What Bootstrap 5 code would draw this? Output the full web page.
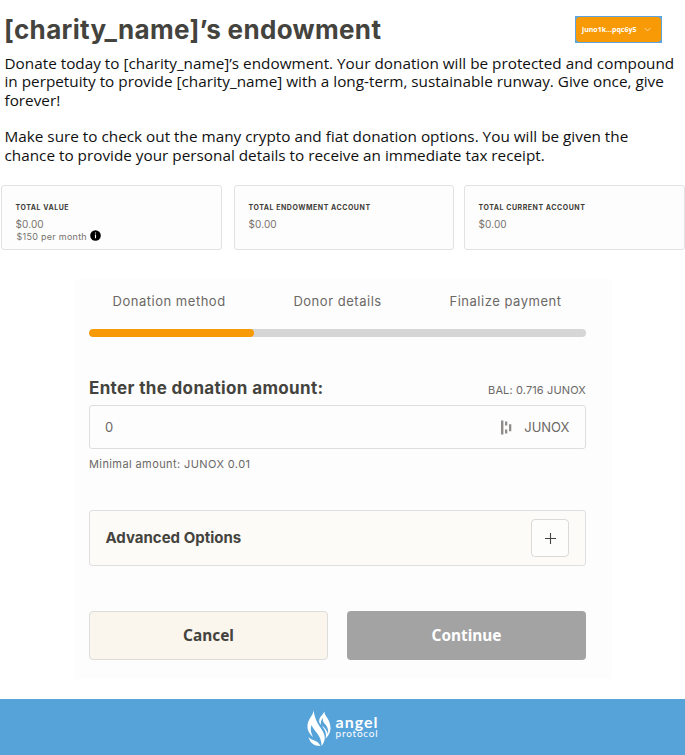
<!DOCTYPE html>
<html lang="en">
<head>
<meta charset="utf-8">
<meta name="viewport" content="width=device-width, initial-scale=1">
<title>Endowment donation</title>
<link href="https://cdn.jsdelivr.net/npm/bootstrap@5.3.0/dist/css/bootstrap.min.css" rel="stylesheet">
<style>
body{font-family:"Open Sans",sans-serif;color:#101010;background:#fff;height:755px;overflow:hidden}
.topbar{height:54px;padding:12px 23px 0 4px}
.page-title{font:700 26px/36px Inter,sans-serif;letter-spacing:.33px;color:#44433e}
.wallet{border:1px solid #5ba5dc;background:#5ba5dc;width:87.5px;height:27px;margin-top:4px}
.wallet .btn{background:#f79a05;border:0;border-radius:4px;color:#fff;font-weight:700;font-size:7px;line-height:1;padding:0 10px 0 6.5px}
.intro{font-size:15.3px;line-height:18.3px;padding-left:4.5px;height:131px;white-space:nowrap}
.intro p{margin-bottom:18.6px}
.totals{display:grid;grid-template-columns:221px 220px 221px;column-gap:10px;justify-content:end;height:65px}
.total-box:first-child{margin-left:-2px;margin-right:2px}
.total-box{background:#fdfdfd;border:1px solid #e2e2e4;border-radius:3px;padding:17px 14px 0 13.5px;font-family:Inter,sans-serif;color:#77736d}
.total-box h2{font-size:7px;line-height:9px;font-weight:700;letter-spacing:.53px;color:#3f3d3a;margin-bottom:6px}
.total-box .amount{font-size:10px;line-height:12px;letter-spacing:.1px}
.total-box .monthly{font-size:9px;line-height:13px;letter-spacing:.27px;padding-left:1px;gap:3px}
.monthly svg{margin-top:-2px}
.panel{width:537px;height:400px;margin:29px 0 0 75px;background:#fdfdfd;padding:13px 26px 0 14px;font-family:Inter,sans-serif;color:#6b6865}
.steps{font-size:13px;line-height:18px;letter-spacing:.52px;height:37px;padding:0 24.5px 0 23.5px}
.panel .progress{height:8px;background:#d6d6d6;border-radius:4px}
.panel .progress-bar{width:165px;background:#f79a05;border-radius:4px}
.amount-head{height:68px;padding-bottom:5px}
.amount-head label{font-weight:700;font-size:17px;line-height:24px;letter-spacing:.35px;color:#44433e}
.balance{font-size:11px;line-height:20px;letter-spacing:.13px}
.amount-field{height:44px;border:1px solid #dddddf;border-radius:3px;font-size:13px;padding:1px 15.5px 0 15px}
.amount-field svg{margin-right:12px}
.hint{font-size:11px;line-height:17px;letter-spacing:.4px;margin-top:7px}
.advanced{height:56px;margin-top:37px;border:1px solid #dfdfdf;border-radius:3px;background:#fcfbf7;font-weight:700;font-size:15px;color:#44433e;padding:0 16px 0 15.5px}
.plus-btn{width:38px;height:38px;padding:0;background:#fdfdfc;border:1px solid #dadada;border-radius:4px}
.actions{margin-top:45px;gap:19px}
.actions .btn{height:49px;border-radius:4px;font:700 15.4px/20px "Noto Sans",sans-serif;padding:0}
.btn-cancel{background:#faf5ed;border:1px solid #dcdcd8;color:#44433e}
.btn-go{background:#a3a3a3;border:0;color:#fff}
.foot{margin-top:20px;height:56px;background:#56a3da;color:#fff;gap:4px;padding-top:2px}
.brand{font-family:Lato,sans-serif}
.brand-top{font-size:16px;line-height:13px;font-weight:700;letter-spacing:1px;margin-top:-4px}
.brand-sub{font-size:10px;line-height:10px;letter-spacing:.8px}
</style>
</head>
<body>
<header class="topbar d-flex justify-content-between align-items-start">
  <h1 class="page-title m-0 text-nowrap">[charity_name]’s endowment</h1>
  <div class="wallet d-flex">
    <button class="btn w-100 h-100 d-flex align-items-center justify-content-between">juno1k...pqc6y5
      <svg width="7" height="5" viewBox="0 0 7 5" fill="none" stroke="#fff" stroke-opacity=".75" stroke-width=".8"><path d="M.5.9l3 3 3-3"/></svg>
    </button>
  </div>
</header>
<section class="intro">
  <p>Donate today to [charity_name]’s endowment. Your donation will be protected and compound<br>in perpetuity to provide [charity_name] with a long-term, sustainable runway. Give once, give<br>forever!</p>
  <p class="mb-0">Make sure to check out the many crypto and fiat donation options. You will be given the<br>chance to provide your personal details to receive an immediate tax receipt.</p>
</section>
<section class="totals">
  <div class="total-box"><h2>TOTAL VALUE</h2><div class="amount">$0.00</div>
    <div class="monthly d-flex align-items-center">$150 per month
      <svg width="11" height="11" viewBox="0 0 11 11"><circle cx="5.5" cy="5.5" r="5.3" fill="#000"/><path d="M5.5 2.4v1.2M5.5 4.6v3.7" stroke="#fff" stroke-width="1.1"/></svg>
    </div></div>
  <div class="total-box"><h2>TOTAL ENDOWMENT ACCOUNT</h2><div class="amount">$0.00</div></div>
  <div class="total-box"><h2>TOTAL CURRENT ACCOUNT</h2><div class="amount">$0.00</div></div>
</section>
<main class="panel">
  <div class="steps d-flex justify-content-between"><span>Donation method</span><span>Donor details</span><span>Finalize payment</span></div>
  <div class="progress"><div class="progress-bar"></div></div>
  <div class="amount-head d-flex justify-content-between align-items-end"><label>Enter the donation amount:</label><span class="balance">BAL: 0.716 JUNOX</span></div>
  <div class="amount-field d-flex align-items-center">
    <span>0</span>
    <svg class="ms-auto" width="11" height="15" viewBox="0 0 11 15" fill="#8f8c89"><path d="M0 .5h2.4v14H0zM4 1.5h2.3v4H4zM4 9.5h2.3v4H4zM8 4.3h2.3v7H8z"/></svg>
    <span>JUNOX</span>
  </div>
  <div class="hint">Minimal amount: JUNOX 0.01</div>
  <div class="advanced d-flex align-items-center justify-content-between"><span>Advanced Options</span>
    <button class="btn plus-btn d-flex align-items-center justify-content-center"><svg width="11" height="11" viewBox="0 0 11 11" stroke="#44433e" stroke-width="1.1"><path d="M5.5 0v11M0 5.5h11"/></svg></button>
  </div>
  <div class="actions d-flex"><button class="btn btn-cancel flex-fill w-50">Cancel</button><button class="btn btn-go flex-fill w-50">Continue</button></div>
</main>
<footer class="foot d-flex align-items-center justify-content-center">
  <svg width="25" height="37" viewBox="0 0 25 37" fill="#fff">
    <path d="M6.5 0C7 5 0 9 .5 17c.3 5 2.500 7 5.500 10-2-4-3-8-1.500-12C7 21 15 26 14.500 36 19 31 18.500 25 15 20 11 14 8 10 6.500 0z"/>
    <path d="M17.500 1.500C17 6 23.500 9 23.500 18c0 5-2.500 8-5 11 1.500-6-.5-9-3.500-13 2 1 5 4 6 8 1-6-2-9-4-11-1-1.500-1.500-3-1-5-2 2-2.500 4-2 7l-1.500-2C11 8 15 6 17.500 1.500z"/>
    <path d="M1.500 27c4 4.500 9 2.500 12 9C7 36 3 33 1.500 27z"/>
  </svg>
  <div class="brand"><div class="brand-top">angel</div><div class="brand-sub">protocol</div></div>
</footer>
<script src="https://cdn.jsdelivr.net/npm/bootstrap@5.3.0/dist/js/bootstrap.bundle.min.js"></script>
</body>
</html>
